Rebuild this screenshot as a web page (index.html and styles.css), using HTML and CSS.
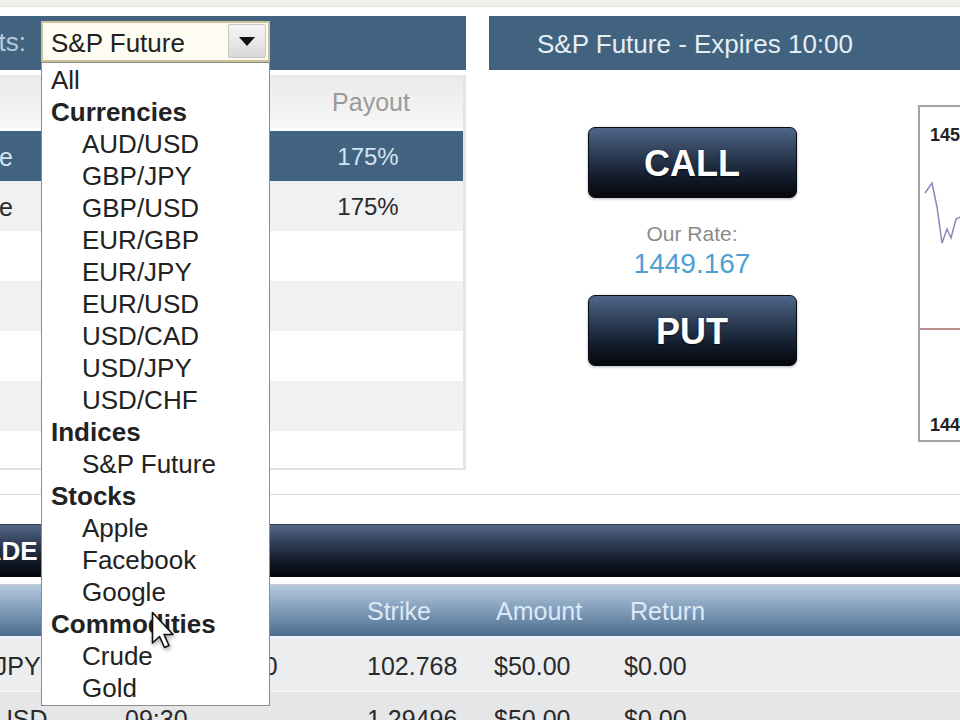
FILE: index.html
```html
<!DOCTYPE html>
<html>
<head>
<meta charset="utf-8">
<title>Trading</title>
<link rel="stylesheet" href="styles.css">
</head>
<body>
<div class="topstrip"></div>
<div class="main">
  <section class="left">
    <div class="bar">
      <div class="lbl"><span>Markets:</span></div>
      <div class="select">
        <span class="sel-text">S&amp;P Future</span>
        <span class="sel-btn"><svg width="16" height="9" viewBox="0 0 16 9"><path d="M0 0H16L8 9Z" fill="#111"/></svg></span>
        <ul class="options">
          <li class="opt-all">All</li>
          <li class="grp">Currencies</li>
          <li class="opt">AUD/USD</li>
          <li class="opt">GBP/JPY</li>
          <li class="opt">GBP/USD</li>
          <li class="opt">EUR/GBP</li>
          <li class="opt">EUR/JPY</li>
          <li class="opt">EUR/USD</li>
          <li class="opt">USD/CAD</li>
          <li class="opt">USD/JPY</li>
          <li class="opt">USD/CHF</li>
          <li class="grp">Indices</li>
          <li class="opt">S&amp;P Future</li>
          <li class="grp">Stocks</li>
          <li class="opt">Apple</li>
          <li class="opt">Facebook</li>
          <li class="opt">Google</li>
          <li class="grp">Commodities</li>
          <li class="opt">Crude</li>
          <li class="opt">Gold</li>
        </ul>
      </div>
    </div>
    <div class="mtable">
      <div class="mhead"><div class="c-name"></div><div></div><div class="c-pay">Payout</div></div>
      <div class="mrow sel"><div class="c-name"><span>S&amp;P Future</span></div><div></div><div class="c-pay">175%</div></div>
      <div class="mrow alt"><div class="c-name"><span>S&amp;P Future</span></div><div></div><div class="c-pay">175%</div></div>
      <div class="mrow"></div>
      <div class="mrow alt"></div>
      <div class="mrow"></div>
      <div class="mrow alt"></div>
      <div class="mrow last"></div>
    </div>
  </section>
  <section class="right">
    <div class="bar title">S&amp;P Future - Expires 10:00</div>
    <div class="trade">
      <div class="actions">
        <button class="btn">CALL</button>
        <div class="rate-lbl">Our Rate:</div>
        <div class="rate">1449.167</div>
        <button class="btn put">PUT</button>
      </div>
      <div class="chart">
        <svg class="plot" viewBox="0 0 200 333" preserveAspectRatio="none">
          <line x1="0" y1="222" x2="200" y2="222" stroke="#a86a6a" stroke-width="1.5"/>
          <polyline points="5,86 12,76 17,100 22,136 27,122 31,131 36,112 44,108" fill="none" stroke="#8a88bb" stroke-width="1.5"/>
        </svg>
        <span class="yl">1450.0</span>
        <span class="yl">1448.0</span>
      </div>
    </div>
  </section>
</div>
<div class="sep"></div>
<div class="tbar"><span>TRADE HISTORY</span></div>
<div class="trades">
  <div class="thead">
    <div>Asset</div><div>Time</div><div></div><div>Strike</div><div class="amt">Amount</div><div class="ret">Return</div>
  </div>
  <div class="trow">
    <div>GBP/JPY</div><div>09:30</div><div>10:00</div><div>102.768</div><div>$50.00</div><div>$0.00</div>
  </div>
  <div class="trow r2">
    <div>EUR/USD</div><div>09:30</div><div></div><div>1.29496</div><div>$50.00</div><div>$0.00</div>
  </div>
</div>
<svg class="cursor" width="24" height="38" viewBox="0 0 24 38"><path d="M1.5 1.5V32L8.5 25.5L13.5 36.5L18 34.5L13 23.5H22Z" fill="#fff" stroke="#111" stroke-width="1.6" stroke-linejoin="round"/></svg>
</body>
</html>
```
FILE: styles.css
```css
* { box-sizing: border-box; margin: 0; padding: 0; }
html, body { width: 960px; height: 720px; overflow: hidden; }
body {
  background: #fff;
  font-family: "Liberation Sans", Arial, sans-serif;
  color: #333;
  position: relative;
}
.topstrip { height: 7px; background: #eef1ea; border-bottom: 1px solid #dfe3da; }

.main { display: flex; gap: 23px; margin-top: 9px; height: 454px; }

.bar { height: 54px; background: #41637f; }

/* left column */
.left { width: 466px; flex: none; display: flex; flex-direction: column; }
.left .bar { display: flex; align-items: flex-start; padding-top: 5px; }
.lbl {
  width: 26px; height: 41px; display: flex; justify-content: flex-end;
  white-space: nowrap; font-size: 26px; line-height: 43px; color: #b9cadb;
}
.select {
  position: relative; margin-left: 15px; width: 229px; height: 41px;
  border: 2px solid #cdbf9a; background: #fffdf2; display: flex; align-items: flex-start;
}
.sel-text { flex: 1; padding-left: 8px; font-size: 26px; line-height: 40px; color: #222; white-space: nowrap; }
.sel-btn {
  width: 38px; height: 34px; margin: 1px 2px 0 0; display: flex; align-items: center; justify-content: center;
  background: linear-gradient(#f6f6f6, #d9d9d9); border: 1px solid #c6c6c6; border-radius: 2px;
}
.options {
  position: absolute; z-index: 10; top: 39px; left: -2px; width: 229px;
  background: #fff; border: 1px solid #8c8c8c; padding: 1px 0;
  list-style: none; font-size: 26px; line-height: 32px; color: #222; white-space: nowrap;
}
.opt-all, .grp { padding-left: 9px; }
.grp { font-weight: bold; }
.opt { padding-left: 40px; }

.mtable {
  margin-top: 5px; flex: 1; display: flex; flex-direction: column;
  border-right: 3px solid #e2e4e6; border-bottom: 2px solid #dfe1e3;
}
.mhead, .mrow { display: grid; grid-template-columns: 13px 1fr 190px; align-items: center; }
.mhead {
  height: 53px; margin-bottom: 3px; padding-top: 2px;
  background: linear-gradient(#eaeaea, #f7f7f7);
  font-size: 25px; color: #9a9a9a;
}
.c-name { display: flex; justify-content: flex-end; white-space: nowrap; font-size: 25px; }
.c-pay { text-align: center; font-size: 24px; }
.mhead .c-pay { font-size: 25px; padding-left: 6px; }
.mrow { height: 50px; padding-top: 2px; background: #fff; color: #2a2a2a; }
.mrow.alt { background: #eff1f3; }
.mrow.sel { background: #41637f; color: #d3e2f0; }
.mrow.last { flex: 1; height: auto; }

/* right column */
.right { flex: 1; display: flex; flex-direction: column; min-width: 0; }
.title { padding-left: 48px; font-size: 26px; line-height: 56px; color: #e6eef5; white-space: nowrap; }
.trade { display: flex; flex: 1; }
.actions {
  width: 429px; flex: none; padding: 57px 23px 0 0;
  display: flex; flex-direction: column; align-items: center;
}
.btn {
  width: 209px; height: 71px; border-radius: 7px;
  border: 1px solid #080b12;
  background: linear-gradient(#50668a 0%, #33455f 30%, #141d2d 70%, #04060a 100%);
  color: #fff; font-family: "Liberation Sans", Arial, sans-serif; font-weight: bold; font-size: 36px;
  text-shadow: 0 1px 2px rgba(0,0,0,.8);
  box-shadow: 0 1px 3px rgba(0,0,0,.3);
  padding-top: 2px;
}
.rate-lbl { margin-top: 24px; font-size: 21px; line-height: 24px; color: #8a8a8a; }
.rate { margin-top: 2px; font-size: 28px; line-height: 32px; color: #4f9fd1; }
.put { margin-top: 15px; }

.chart {
  position: relative; flex: none; width: 200px; height: 337px; margin-top: 35px;
  border: 2px solid #a3a3a3; background: #fff;
  display: flex; flex-direction: column; justify-content: space-between;
  padding: 17px 0 4px 10px;
  box-shadow: 0 0 2px rgba(0,0,0,.08);
}
.plot { position: absolute; left: 0; top: 0; width: 200px; height: 333px; }
.yl { position: relative; font-weight: bold; font-size: 18px; line-height: 22px; color: #222; }

/* bottom */
.sep { height: 1px; margin-top: 24px; background: #dcdcdc; }
.tbar {
  height: 53px; margin-top: 29px;
  background: linear-gradient(#56688a 0%, #34435e 30%, #121a28 70%, #030408 100%);
  border-top: 1px solid #2e3a4f;
  color: #fff; font-weight: bold; font-size: 26px; line-height: 53px; white-space: nowrap;
}
.tbar span { display: inline-block; margin-left: -52px; }
.trades { margin-left: -65px; width: 1025px; margin-top: 7px; border-top: 1px solid #c9cdd2; }
.thead, .trow { display: grid; grid-template-columns: 190px 90px 152px 127px 130px 1fr; white-space: nowrap; font-size: 25px; }
.thead {
  height: 54px; line-height: 53px; color: #dde9f5;
  background: linear-gradient(#b4c9dd 0%, #84a0bd 45%, #4c6c8d 100%);
  border-bottom: 3px solid #eef2f6;
}
.thead .amt { padding-left: 2px; }
.thead .ret { padding-left: 6px; }
.trow { height: 52px; line-height: 54px; background: #ebedef; color: #2a2a2a; }
.trow.r2 { background: #e4e6e8; border-top: 1px solid #f4f5f6; }

.cursor {
  position: absolute; left: 151px; top: 611px; z-index: 20;
  filter: drop-shadow(1px 2px 2px rgba(0,0,0,.35));
}
```
